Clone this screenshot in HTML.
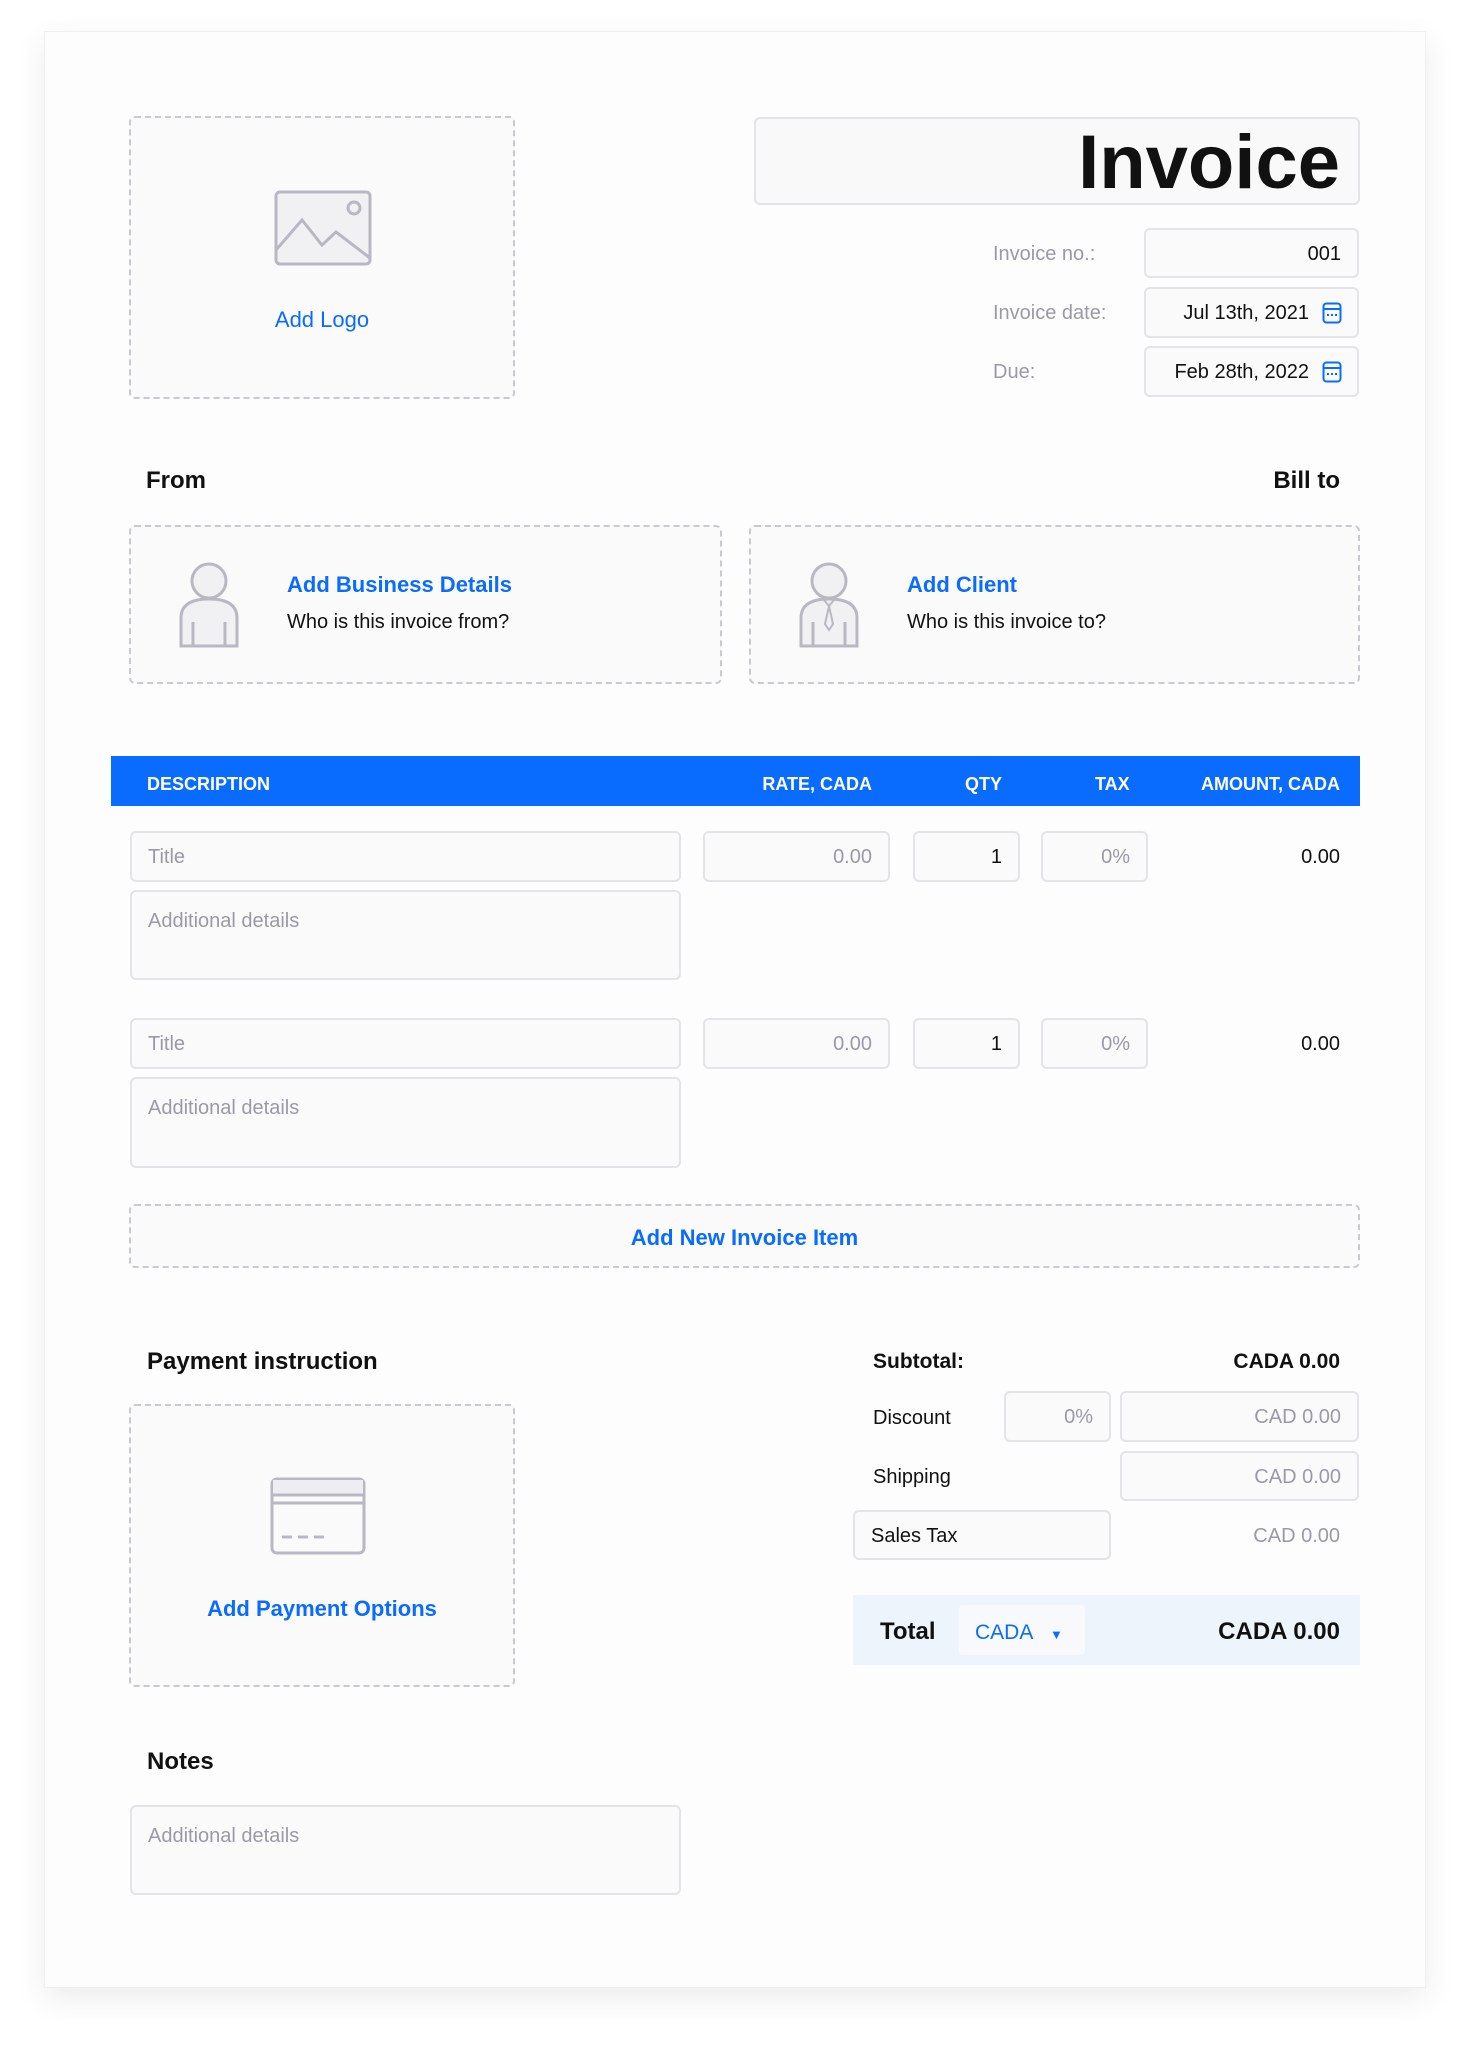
<!DOCTYPE html>
<html><head><meta charset="utf-8"><style>
*{margin:0;padding:0;box-sizing:border-box}
body{width:1472px;height:2048px;background:#fff;font-family:"Liberation Sans",sans-serif;position:relative;overflow:hidden;color:#111}
.card{position:absolute;left:44px;top:31px;width:1382px;height:1957px;background:#fdfdfd;box-shadow:0 10px 30px rgba(0,0,0,.08);border:1px solid #f0f0f3}
.a{position:absolute}
.dash{position:absolute;border:2px dashed #c9c9d0;border-radius:6px;background:#fafafb}
.inp{position:absolute;border:2px solid #e3e3e8;border-radius:6px;background:#fafafb;font-size:20px;color:#9a9aa6;display:flex;align-items:center;padding:0 16px;padding-top:2px}
.r{justify-content:flex-end}
.blue{color:#0a6cff}
.lbl{position:absolute;font-size:20px;color:#9a9aa6}
.h{position:absolute;font-size:24px;font-weight:bold;color:#111}
.th{position:absolute;top:774px;font-size:18px;font-weight:bold;color:#fff}
</style></head><body>
<div class="card"></div>

<div class="dash" style="left:129px;top:116px;width:386px;height:283px"></div>
<svg class="a" style="left:274px;top:190px" width="98" height="76" viewBox="0 0 98 76"><rect x="2" y="2" width="94" height="72" rx="4" fill="#f1f1f4" stroke="#b8b8c2" stroke-width="3"/><polyline points="2,60 28,30 48,55 62,42 96,68" fill="none" stroke="#b8b8c2" stroke-width="3"/><circle cx="80" cy="18" r="6" fill="none" stroke="#b8b8c2" stroke-width="3"/></svg>
<div class="a blue" style="left:129px;width:386px;top:307px;text-align:center;font-size:22px">Add Logo</div>

<div class="inp r" style="left:754px;top:117px;width:606px;height:88px;color:#111;font-size:76px;font-weight:bold;padding-right:18px;background:#f9f9fa">Invoice</div>
<div class="lbl" style="left:993px;top:243px">Invoice no.:</div>
<div class="lbl" style="left:993px;top:302px">Invoice date:</div>
<div class="lbl" style="left:993px;top:361px">Due:</div>
<div class="inp r" style="left:1144px;top:228px;width:215px;height:50px;color:#111">001</div>
<div class="inp r" style="left:1144px;top:287px;width:215px;height:51px;color:#111;padding-right:48px">Jul 13th, 2021</div>
<div class="inp r" style="left:1144px;top:346px;width:215px;height:51px;color:#111;padding-right:48px">Feb 28th, 2022</div>
<svg class="a" style="left:1322px;top:302px" width="20" height="22"><rect x="1.5" y="1.5" width="17" height="19" rx="3" fill="none" stroke="#0a6cff" stroke-width="2"/><line x1="2" y1="7" x2="18" y2="7" stroke="#0a6cff" stroke-width="2"/><line x1="5" y1="13" x2="15" y2="13" stroke="#0a6cff" stroke-width="2" stroke-dasharray="2 2"/></svg>
<svg class="a" style="left:1322px;top:361px" width="20" height="22"><rect x="1.5" y="1.5" width="17" height="19" rx="3" fill="none" stroke="#0a6cff" stroke-width="2"/><line x1="2" y1="7" x2="18" y2="7" stroke="#0a6cff" stroke-width="2"/><line x1="5" y1="13" x2="15" y2="13" stroke="#0a6cff" stroke-width="2" stroke-dasharray="2 2"/></svg>

<div class="h" style="left:146px;top:467px">From</div>
<div class="h" style="right:132px;top:467px">Bill to</div>
<div class="dash" style="left:129px;top:525px;width:593px;height:159px"></div>
<div class="dash" style="left:749px;top:525px;width:611px;height:159px"></div>
<svg class="a" style="left:178px;top:562px" width="62" height="86" viewBox="0 0 62 86"><circle cx="31" cy="19" r="17" fill="#f1f1f4" stroke="#b8b8c2" stroke-width="3"/><path d="M3 84 V56 Q3 37 31 37 Q59 37 59 56 V84 Z" fill="#f1f1f4" stroke="#b8b8c2" stroke-width="3"/><line x1="15" y1="60" x2="15" y2="84" stroke="#b8b8c2" stroke-width="3"/><line x1="47" y1="60" x2="47" y2="84" stroke="#b8b8c2" stroke-width="3"/></svg>
<div class="a blue" style="left:287px;top:572px;font-size:22px;font-weight:bold">Add Business Details</div>
<div class="a" style="left:287px;top:611px;font-size:20px">Who is this invoice from?</div>
<svg class="a" style="left:798px;top:562px" width="62" height="86" viewBox="0 0 62 86"><circle cx="31" cy="19" r="17" fill="#f1f1f4" stroke="#b8b8c2" stroke-width="3"/><path d="M3 84 V56 Q3 37 31 37 Q59 37 59 56 V84 Z" fill="#f1f1f4" stroke="#b8b8c2" stroke-width="3"/><line x1="15" y1="60" x2="15" y2="84" stroke="#b8b8c2" stroke-width="3"/><line x1="47" y1="60" x2="47" y2="84" stroke="#b8b8c2" stroke-width="3"/><path d="M26 38 L31 44 L36 38 M31 44 L27 62 L31 68 L35 62 Z" fill="none" stroke="#b8b8c2" stroke-width="2"/></svg>
<div class="a blue" style="left:907px;top:572px;font-size:22px;font-weight:bold">Add Client</div>
<div class="a" style="left:907px;top:611px;font-size:20px">Who is this invoice to?</div>

<div class="a" style="left:111px;top:756px;width:1249px;height:50px;background:#0a6cff"></div>
<div class="th" style="left:147px">DESCRIPTION</div>
<div class="th" style="right:600px">RATE, CADA</div>
<div class="th" style="left:965px">QTY</div>
<div class="th" style="left:1095px">TAX</div>
<div class="th" style="right:132px">AMOUNT, CADA</div>

<div class="inp" style="left:130px;top:831px;width:551px;height:51px">Title</div>
<div class="inp r" style="left:703px;top:831px;width:187px;height:51px">0.00</div>
<div class="inp r" style="left:913px;top:831px;width:107px;height:51px;color:#111">1</div>
<div class="inp r" style="left:1041px;top:831px;width:107px;height:51px">0%</div>
<div class="a" style="right:132px;top:846px;font-size:20px">0.00</div>
<div class="inp" style="left:130px;top:890px;width:551px;height:90px;align-items:flex-start;padding-top:18px">Additional details</div>

<div class="inp" style="left:130px;top:1018px;width:551px;height:51px">Title</div>
<div class="inp r" style="left:703px;top:1018px;width:187px;height:51px">0.00</div>
<div class="inp r" style="left:913px;top:1018px;width:107px;height:51px;color:#111">1</div>
<div class="inp r" style="left:1041px;top:1018px;width:107px;height:51px">0%</div>
<div class="a" style="right:132px;top:1033px;font-size:20px">0.00</div>
<div class="inp" style="left:130px;top:1077px;width:551px;height:91px;align-items:flex-start;padding-top:18px">Additional details</div>

<div class="dash" style="left:129px;top:1204px;width:1231px;height:64px"></div>
<div class="a blue" style="left:129px;width:1231px;top:1225px;text-align:center;font-size:22px;font-weight:bold">Add New Invoice Item</div>

<div class="h" style="left:147px;top:1348px">Payment instruction</div>
<div class="dash" style="left:129px;top:1404px;width:386px;height:283px"></div>
<svg class="a" style="left:270px;top:1477px" width="96" height="78" viewBox="0 0 96 78"><rect x="2" y="2" width="92" height="74" rx="5" fill="#fafafb" stroke="#b8b8c2" stroke-width="3"/><rect x="3" y="3" width="90" height="15" fill="#eeeef2"/><line x1="2" y1="18" x2="94" y2="18" stroke="#b8b8c2" stroke-width="3"/><line x1="2" y1="26" x2="94" y2="26" stroke="#b8b8c2" stroke-width="3"/><line x1="12" y1="60" x2="60" y2="60" stroke="#b8b8c2" stroke-width="3" stroke-dasharray="10 6"/></svg>
<div class="a blue" style="left:129px;width:386px;top:1596px;text-align:center;font-size:22px;font-weight:bold">Add Payment Options</div>

<div class="a" style="left:873px;top:1350px;font-size:21px;font-weight:bold">Subtotal:</div>
<div class="a" style="right:132px;top:1350px;font-size:21px;font-weight:bold">CADA 0.00</div>
<div class="a" style="left:873px;top:1407px;font-size:20px">Discount</div>
<div class="inp r" style="left:1004px;top:1391px;width:107px;height:51px">0%</div>
<div class="inp r" style="left:1120px;top:1391px;width:239px;height:51px">CAD 0.00</div>
<div class="a" style="left:873px;top:1466px;font-size:20px">Shipping</div>
<div class="inp r" style="left:1120px;top:1451px;width:239px;height:50px">CAD 0.00</div>
<div class="inp" style="left:853px;top:1510px;width:258px;height:50px;color:#111">Sales Tax</div>
<div class="a" style="right:132px;top:1525px;font-size:20px;color:#9a9aa6">CAD 0.00</div>

<div class="a" style="left:853px;top:1595px;width:507px;height:70px;background:#eef4fc"></div>
<div class="a" style="left:880px;top:1618px;font-size:24px;font-weight:bold">Total</div>
<div class="a" style="left:959px;top:1605px;width:126px;height:50px;background:#f7f9fd;border-radius:4px"></div>
<div class="a blue" style="left:975px;top:1621px;font-size:21px">CADA <span style="font-size:13px;margin-left:12px">▼</span></div>
<div class="a" style="right:132px;top:1618px;font-size:24px;font-weight:bold">CADA 0.00</div>

<div class="h" style="left:147px;top:1748px">Notes</div>
<div class="inp" style="left:130px;top:1805px;width:551px;height:90px;align-items:flex-start;padding-top:18px">Additional details</div>
</body></html>
